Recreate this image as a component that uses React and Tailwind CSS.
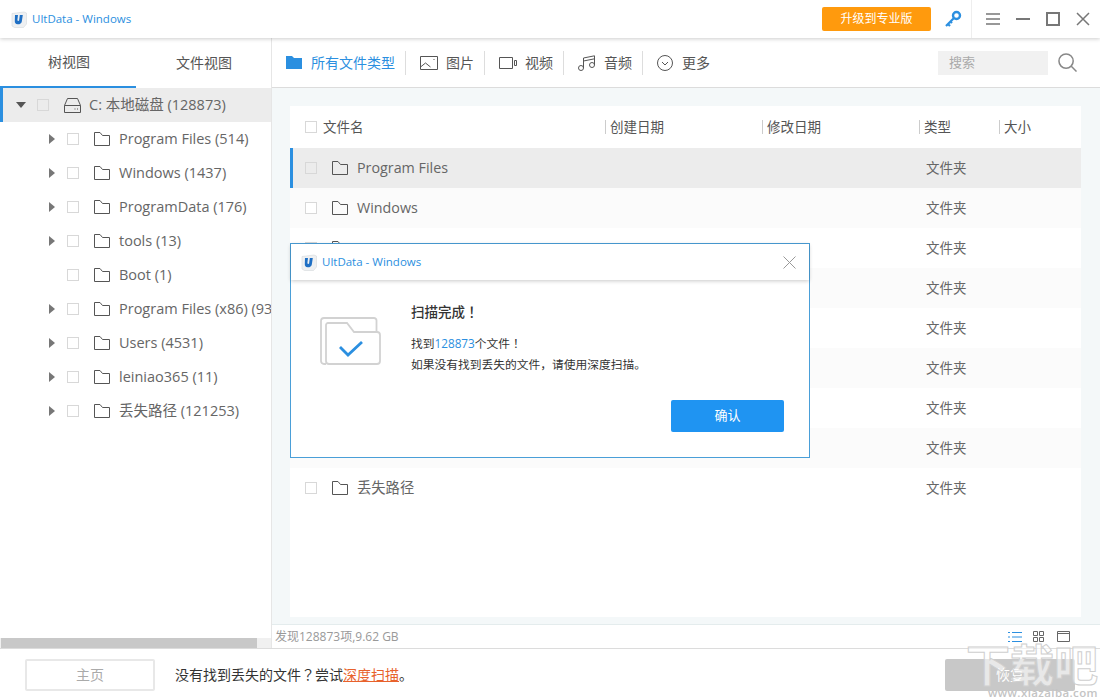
import React from 'react'

const font = { fontFamily: '"Open Sans", "Noto Sans CJK SC", sans-serif' }

const Folder = () => (
  <svg viewBox="0 0 16 14" className="h-[14px] w-4 shrink-0" fill="none" stroke="#555" strokeWidth="1">
    <path d="M.5.5h5.500l2.500 3h7v10H.5z" />
  </svg>
)

const Check = ({ className = '' }) => (
  <span className={`block h-3 w-3 shrink-0 border border-[#d8d8d8] bg-white ${className}`} />
)

const Logo = () => (
  <svg viewBox="0 0 16 17" className="h-[17px] w-4 shrink-0">
    <path d="M1 2.500 13 1l2.500 1v11l-3 3.500H3.500L1 15z" fill="#eef0f2" stroke="#d5d8dc" strokeWidth=".6" />
    <path d="M4 4h3l-.6 5c0 1 1.100 1.200 1.700.6L8.800 4h3l-1 6.500c-.3 2-2.100 3-4.200 2.800-1.900-.2-3-1.400-2.800-3.300z" fill="#1f6fc4" />
  </svg>
)

// full-width punctuation sits in the middle of its cell in the reference
const Punct = ({ children }) => <span className="font-['Noto_Sans_CJK_TC']">{children}</span>

const Tree = ({ label }) => (
  <div className="flex h-[34px] items-center overflow-hidden whitespace-nowrap">
    {label[1] ? (
      <svg viewBox="0 0 6 10" className="ml-[49px] h-[10px] w-[6px] shrink-0"><path d="M0 0l6 5-6 5z" fill="#777" /></svg>
    ) : (
      <span className="ml-[49px] w-[6px] shrink-0" />
    )}
    <Check className="ml-[12px]" />
    <span className="ml-[15px]"><Folder /></span>
    <span className="ml-[9px] text-[14.5px] text-[#666]">{label[0]}</span>
  </div>
)

const treeRows = [
  ['Program Files (514)', true],
  ['Windows (1437)', true],
  ['ProgramData (176)', true],
  ['tools (13)', true],
  ['Boot (1)', false],
  ['Program Files (x86) (93', true],
  ['Users (4531)', true],
  ['leiniao365 (11)', true],
  ['丢失路径 (121253)', true],
]

const files = ['Program Files', 'Windows', 'ProgramData', 'tools', 'Boot', 'Program Files (x86)', 'Users', 'leiniao365', '丢失路径']

const Divider = () => <span className="ml-[10px] mr-[14px] h-6 w-px bg-[#ddd]" />

const ToolItem = ({ icon, label, active }) => (
  <div className={`flex items-center gap-[8px] text-sm ${active ? 'text-[#2b8fe0]' : 'text-[#555]'}`}>
    {icon}
    <span>{label}</span>
  </div>
)

export default function App() {
  return (
    <div className="relative flex h-[700px] w-[1100px] flex-col overflow-hidden bg-white" style={font}>
      {/* title bar */}
      <div className="relative z-10 flex h-[38px] shrink-0 items-center bg-white pl-[11px] pr-[10px] shadow-[0_1px_4px_rgba(0,0,0,0.2)]">
        <Logo />
        <span className="ml-[5px] text-[11.5px] text-[#2b8fe0]">UltData - Windows</span>
        <button className="ml-auto flex h-6 w-[109px] items-center justify-center rounded-[2px] bg-[#ff9a0d] text-xs text-white">升级到专业版</button>
        <svg viewBox="0 0 18 18" className="ml-[13px] h-[18px] w-[18px]" fill="none">
          <circle cx="12.500" cy="5.500" r="3.500" stroke="#2b8fe0" strokeWidth="2.400" />
          <path d="M10 8 2 16M4 14l2 2M6.500 11.500l1.500 1.500" stroke="#2b8fe0" strokeWidth="2.200" />
        </svg>
        <span className="ml-[9px] h-[38px] w-px bg-[#eee]" />
        <svg viewBox="0 0 14 12" className="ml-[14px] h-3 w-[14px]" stroke="#777" strokeWidth="1.500"><path d="M0 1h14M0 6h14M0 11h14" /></svg>
        <svg viewBox="0 0 14 2" className="ml-[16px] h-[2px] w-[14px]" stroke="#777" strokeWidth="2"><path d="M0 1h14" /></svg>
        <svg viewBox="0 0 14 14" className="ml-[16px] h-[14px] w-[14px]" fill="none" stroke="#777" strokeWidth="2"><path d="M1 1h12v12H1z" /></svg>
        <svg viewBox="0 0 14 14" className="ml-[16px] h-[14px] w-[14px]" fill="none" stroke="#777" strokeWidth="1.500"><path d="M1 1l12 12M13 1 1 13" /></svg>
      </div>

      <div className="flex min-h-0 flex-1">
        {/* left tree */}
        <aside className="flex w-[271px] shrink-0 flex-col">
          <div className="flex h-[50px] shrink-0 items-center text-sm text-[#555]">
            <div className="flex h-full w-[136px] items-center justify-center border-b-2 border-[#2b8fe0] pl-[2px]">树视图</div>
            <div className="flex h-full w-[135px] items-center justify-center pl-[1px]">文件视图</div>
          </div>
          <div className="min-h-0 flex-1 overflow-hidden">
            <div className="flex h-[34px] items-center whitespace-nowrap border-l-[3px] border-[#2b8fe0] bg-[#ececec]">
              <svg viewBox="0 0 10 6" className="ml-[13px] h-[6px] w-[10px] shrink-0"><path d="M0 0h10L5 6z" fill="#555" /></svg>
              <Check className="ml-[11px] !bg-[#ececec]" />
              <svg viewBox="0 0 17 15" className="ml-[15px] h-[15px] w-[17px] shrink-0" fill="none" stroke="#555"><path d="M3.500.5h10l3 7v7H.5v-7zM.5 7.500h16" /><path d="M10.500 11h1M13 11h1" /></svg>
              <span className="ml-[8px] text-[14.5px] text-[#666]">C: 本地磁盘 (128873)</span>
            </div>
            {treeRows.map((r) => <Tree key={r[0]} label={r} />)}
          </div>
          <div className="h-[10px] shrink-0 bg-[#f0f0f0] pl-[1px]">
            <div className="h-full w-[256px] bg-[#c8c8c8]" />
          </div>
        </aside>

        {/* right side */}
        <main className="flex min-w-0 flex-1 flex-col border-l border-[#e6e6e6]">
          <div className="flex h-[50px] shrink-0 items-center border-b border-[#dcdcdc] bg-white pl-[14px] pr-[23px]">
            <ToolItem
              active
              label="所有文件类型"
              icon={<svg viewBox="0 0 16 13" className="mr-[1px] h-[13px] w-4"><path d="M0 0h6l2 2h8v11H0z" fill="#2b8fe0" /></svg>}
            />
            <Divider />
            <ToolItem
              label="图片"
              icon={<svg viewBox="0 0 18 14" className="h-[14px] w-[18px]" fill="none" stroke="#555"><path d="M.5.500h17v13H.5zM.5 11l5-4 5 4M13.500 3.500h1" /></svg>}
            />
            <Divider />
            <ToolItem
              label="视频"
              icon={<svg viewBox="0 0 18 12" className="h-3 w-[18px]" fill="none" stroke="#555"><path d="M.5.500h13v11H.5zM15.500 3.500h2v5h-2z" /></svg>}
            />
            <Divider />
            <ToolItem
              label="音频"
              icon={<svg viewBox="0 0 18 16" className="h-4 w-[18px]" fill="none" stroke="#555"><circle cx="3" cy="13" r="2.500" /><circle cx="14" cy="10" r="2.500" /><path d="M5.500 13V3L16.500.8V10M5.500 6l11-2.200" /></svg>}
            />
            <Divider />
            <ToolItem
              label="更多"
              icon={<svg viewBox="0 0 16 16" className="mr-[1px] h-4 w-4" fill="none" stroke="#555"><circle cx="8" cy="8" r="7.500" /><path d="M5 7l3 3 3-3" /></svg>}
            />
            <div className="ml-auto flex h-6 w-[110px] items-center bg-[#f1f1f1] pl-[11px] text-[13px] text-[#aaa]">搜索</div>
            <svg viewBox="0 0 20 20" className="ml-[10px] h-[19px] w-[19px]" fill="none" stroke="#888" strokeWidth="1.600"><circle cx="8.500" cy="8.500" r="7.500" /><path d="M14 14l5.500 5.500" /></svg>
          </div>

          <div className="min-h-0 flex-1 bg-[#f4f8f9] pb-[7px] pl-[18px] pr-[19px] pt-[18px]">
            <div className="h-full bg-white">
              <div className="flex h-[42px] items-center text-[13.5px] text-[#555]">
                <div className="flex w-[315px] items-center">
                  <Check className="ml-[15px]" />
                  <span className="ml-[6px]">文件名</span>
                </div>
                <div className="flex h-[14px] w-[157px] items-center border-l border-[#ccc] pl-[4px]">创建日期</div>
                <div className="flex h-[14px] w-[157px] items-center border-l border-[#ccc] pl-[4px]">修改日期</div>
                <div className="flex h-[14px] w-[80px] items-center border-l border-[#ccc] pl-[4px]">类型</div>
                <div className="flex h-[14px] items-center border-l border-[#ccc] pl-[4px]">大小</div>
              </div>
              {files.map((f, i) => (
                <div
                  key={f}
                  className={`flex h-10 items-center ${i === 0 ? 'border-l-[3px] border-[#2b8fe0] bg-[#ececec]' : i % 2 === 1 ? 'bg-[#fbfbfb]' : 'bg-white'}`}
                >
                  <Check className={i === 0 ? 'ml-[12px] !bg-[#ececec]' : 'ml-[15px]'} />
                  <span className="ml-[15px]"><Folder /></span>
                  <span className="ml-[9px] w-[569px] text-[14.3px] text-[#666]">{f}</span>
                  <span className="text-[13.5px] text-[#666]">文件夹</span>
                </div>
              ))}
            </div>
          </div>

          <div className="flex h-[24px] shrink-0 items-center border-t border-[#e4eced] bg-white pl-[3px] pr-[30px] text-xs text-[#999]">
            <span>发现128873项,9.62 GB</span>
            <svg viewBox="0 0 14 10" className="ml-auto h-[10px] w-[14px]" stroke="#2b8fe0"><path d="M0 .5h2M4 .5h10M0 5h2M4 5h10M0 9.500h2M4 9.500h10" /></svg>
            <svg viewBox="0 0 11 11" className="ml-[11px] h-[11px] w-[11px]" fill="none" stroke="#666"><path d="M.5.500h4v4h-4zM6.500.500h4v4h-4zM.5 6.500h4v4h-4zM6.500 6.500h4v4h-4z" /></svg>
            <svg viewBox="0 0 13 11" className="ml-[13px] h-[11px] w-[13px]" fill="none" stroke="#666"><path d="M.5.500h12v10H.5zM.5 2.500h12" /></svg>
          </div>
        </main>
      </div>

      {/* footer */}
      <div className="flex h-[52px] shrink-0 items-center border-t border-[#dcdcdc] bg-white pl-[25px] pr-[25px]">
        <button className="flex h-[32px] w-[130px] items-center justify-center rounded-[2px] border-2 border-[#e8e8e8] text-sm text-[#aaa]">主页</button>
        <span className="ml-[20px] text-sm text-[#333]">
          没有找到丢失的文件<Punct>？</Punct>尝试<span className="text-[#e8622c] underline">深度扫描</span>。
        </span>
        <button className="ml-auto flex h-[32px] w-[130px] items-center justify-center rounded-[2px] bg-[#c8c8c8] text-sm text-white">恢复</button>
      </div>

      {/* site watermark */}
      <div className="pointer-events-none absolute bottom-[1px] right-[2px] flex flex-col items-end leading-none">
        <span className="text-[44px] font-bold leading-[44px] text-white/60 [-webkit-text-stroke:1px_#cfcfcf]">下载吧</span>
        <span className="text-[11.5px] font-semibold leading-[12px] tracking-[0.4px] text-[#c4c4c4]">www.xiazaiba.com</span>
      </div>

      {/* scan result dialog */}
      <div className="absolute left-[290px] top-[243px] flex h-[215px] w-[520px] flex-col border border-[#4a9fd8] bg-white">
        <div className="flex h-[36px] shrink-0 items-center pl-[10px] pr-[13px] shadow-[0_1px_4px_rgba(0,0,0,0.22)]">
          <Logo />
          <span className="ml-[5px] text-[11.5px] text-[#2b8fe0]">UltData - Windows</span>
          <svg viewBox="0 0 13 13" className="ml-auto h-[13px] w-[13px]" fill="none" stroke="#999"><path d="M.5.500l12 12M12.500.500l-12 12" /></svg>
        </div>
        <div className="flex min-h-0 flex-1 pl-[29px]">
          <svg viewBox="0 0 61 48" className="mt-[37px] h-12 w-[61px] shrink-0" fill="none">
            <path d="M1 4a3 3 0 0 1 3-3h50a2.500 2.500 0 0 1 2.500 2.500V16M6 47H4a3 3 0 0 1-3-3V4" stroke="#d2d2d2" strokeWidth="1.800" />
            <path d="M6 44V8a2 2 0 0 1 2-2h19l7 9h23a3 3 0 0 1 3 3v26a3 3 0 0 1-3 3H9a3 3 0 0 1-3-3z" stroke="#d2d2d2" strokeWidth="1.800" fill="#fff" />
            <path d="M20 30l8 8 14-13" stroke="#2b8fe0" strokeWidth="2.800" />
          </svg>
          <div className="ml-[30px] flex-1 pr-[25px] pt-[21px]">
            <div className="text-[13.5px] font-medium leading-[20px] text-[#333]">扫描完成<Punct>！</Punct></div>
            <div className="mt-[10px] text-[11.75px] leading-[21px] text-[#333]">
              <div>找到<span className="text-[#2b8fe0]">128873</span>个文件<Punct>！</Punct></div>
              <div>如果没有找到丢失的文件，请使用深度扫描。</div>
            </div>
            <button className="ml-auto mt-[25px] flex h-8 w-[113px] items-center justify-center rounded-[2px] bg-[#1f94f2] text-[13px] text-white">确认</button>
          </div>
        </div>
      </div>
    </div>
  )
}
